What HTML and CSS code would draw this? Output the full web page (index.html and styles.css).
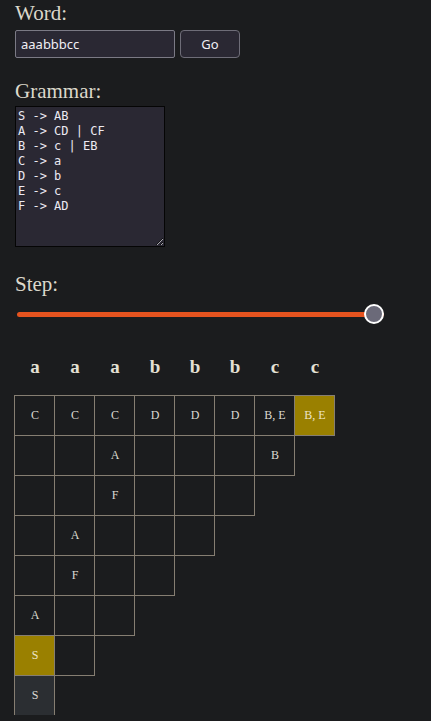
FILE: index.html
```html
<!DOCTYPE html>
<html lang="en">
<head>
<meta charset="utf-8">
<title>CYK</title>
<link rel="stylesheet" href="styles.css">
</head>
<body>
<div class="label">Word:</div>
<div class="word-row">
  <input class="word-input" type="text" value="aaabbbcc">
  <button class="go-btn">Go</button>
</div>
<div class="label grammar-label">Grammar:</div>
<textarea class="grammar" spellcheck="false">S -> AB
A -> CD | CF
B -> c | EB
C -> a
D -> b
E -> c
F -> AD</textarea>
<div class="label step-label">Step:</div>
<input class="step" type="range" min="0" max="10" value="10">
<div class="table">
  <div class="row head">
    <div class="hcell">a</div><div class="hcell">a</div><div class="hcell">a</div><div class="hcell">b</div><div class="hcell">b</div><div class="hcell">b</div><div class="hcell">c</div><div class="hcell">c</div>
  </div>
  <div class="row">
    <div class="cell">C</div><div class="cell">C</div><div class="cell">C</div><div class="cell">D</div><div class="cell">D</div><div class="cell">D</div><div class="cell">B, E</div><div class="cell gold">B, E</div>
  </div>
  <div class="row">
    <div class="cell"></div><div class="cell"></div><div class="cell">A</div><div class="cell"></div><div class="cell"></div><div class="cell"></div><div class="cell">B</div>
  </div>
  <div class="row">
    <div class="cell"></div><div class="cell"></div><div class="cell">F</div><div class="cell"></div><div class="cell"></div><div class="cell"></div>
  </div>
  <div class="row">
    <div class="cell"></div><div class="cell">A</div><div class="cell"></div><div class="cell"></div><div class="cell"></div>
  </div>
  <div class="row">
    <div class="cell"></div><div class="cell">F</div><div class="cell"></div><div class="cell"></div>
  </div>
  <div class="row">
    <div class="cell">A</div><div class="cell"></div><div class="cell"></div>
  </div>
  <div class="row">
    <div class="cell gold">S</div><div class="cell"></div>
  </div>
  <div class="row">
    <div class="cell grey">S</div>
  </div>
</div>
</body>
</html>
```
FILE: styles.css
```css
html, body {
  margin: 0;
  background: #1b1c1e;
}
body {
  padding: 0 15px;
  color: #ddd9cc;
  font-family: "Liberation Serif", "Times New Roman", serif;
  color-scheme: dark;
}
.label {
  font-size: 21px;
  line-height: 26px;
  height: 26px;
  color: #dcd8cb;
}
.word-row {
  display: flex;
  gap: 5px;
  margin-top: 4px;
  height: 28px;
}
.word-input {
  box-sizing: border-box;
  width: 160px;
  height: 28px;
  margin: 0;
  padding: 0 5px;
  background: #2a2833;
  border: 1px solid #7b7a85;
  border-radius: 2px;
  color: #f0eef4;
  font-family: "Noto Sans", "Open Sans", sans-serif;
  font-size: 13px;
  outline: none;
}
.go-btn {
  box-sizing: border-box;
  width: 60px;
  height: 28px;
  margin: 0;
  padding: 0;
  background: #2a2833;
  border: 1px solid #6e6d78;
  border-radius: 4px;
  color: #f0eef4;
  font-family: "Noto Sans", "Open Sans", sans-serif;
  font-size: 13px;
}
.grammar-label {
  margin-top: 20px;
}
.grammar {
  display: block;
  box-sizing: border-box;
  width: 150px;
  height: 141px;
  margin: 2px 0 0 0;
  padding: 2px 2px;
  background: #2a2833;
  border: 1px solid #050505;
  color: #eceaf2;
  font-family: "DejaVu Sans Mono", monospace;
  font-size: 12px;
  line-height: 15px;
  outline: none;
}
.step-label {
  margin-top: 24px;
}
.step {
  display: block;
  -webkit-appearance: none;
  appearance: none;
  width: 367px;
  height: 20px;
  margin: 7px 0 0 2px;
  padding: 0;
  background: transparent;
}
.step::-webkit-slider-runnable-track {
  height: 5px;
  border-radius: 3px;
  background: #e5531f;
}
.step::-webkit-slider-thumb {
  -webkit-appearance: none;
  appearance: none;
  box-sizing: border-box;
  width: 20px;
  height: 20px;
  margin-top: -7.5px;
  border-radius: 50%;
  background: #6b6a79;
  border: 2px solid #ffffff;
}
.table {
  margin: 23px 0 0 -1px;
}
.row {
  display: flex;
  height: 40px;
}
.head {
  margin: 0 0 8px 1px;
}
.hcell {
  flex: none;
  width: 40px;
  height: 40px;
  line-height: 40px;
  text-align: center;
  font-weight: bold;
  font-size: 19px;
  color: #e4e0d4;
}
.cell {
  flex: none;
  box-sizing: border-box;
  width: 41px;
  height: 41px;
  margin-right: -1px;
  padding-left: 1px;
  border: 1px solid #867e72;
  display: flex;
  align-items: center;
  justify-content: center;
  font-size: 12px;
  color: #dcdad2;
}
.gold {
  background: #9a8000;
  color: #ece4c8;
}
.grey {
  background: #2b2e32;
}
```
